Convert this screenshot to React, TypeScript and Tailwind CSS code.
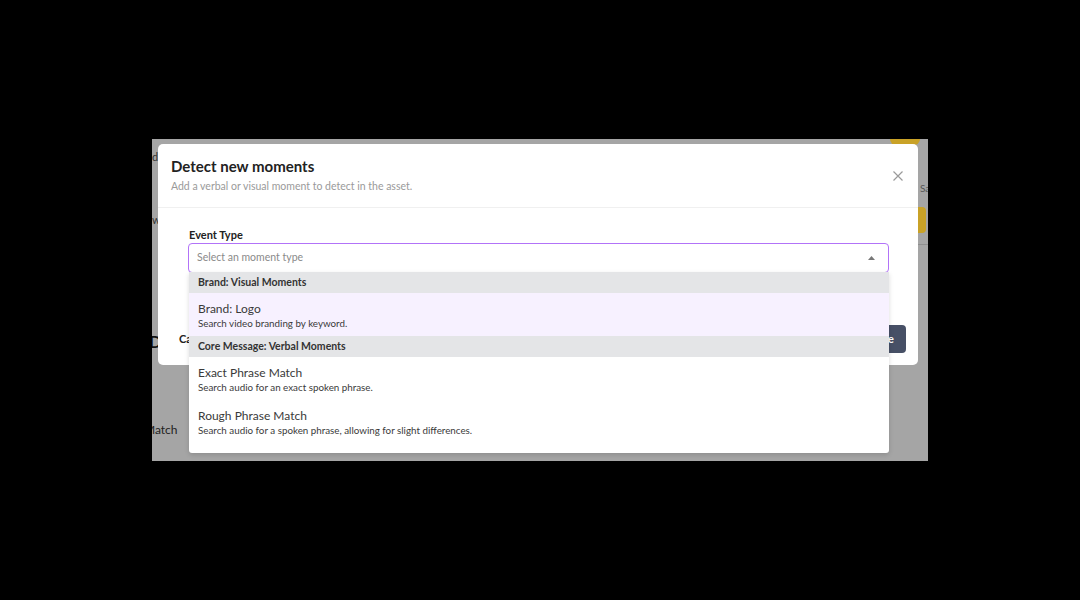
import React from "react";

const font = { fontFamily: "Lato, 'Open Sans', 'Liberation Sans', sans-serif" };

function Item({ title, desc, active }: { title: string; desc: string; active?: boolean }) {
  return (
    <div className={`h-[43px] px-[9px] flex flex-col justify-center ${active ? "bg-[#f7f1ff]" : "bg-white"}`}>
      <div className="text-[12px] leading-[15px] text-[#3a3a3a]">{title}</div>
      <div className="text-[9.8px] leading-[12px] text-[#3a3a3a] mt-[1px]">{desc}</div>
    </div>
  );
}

function Header({ label }: { label: string }) {
  return (
    <div className="h-[21px] px-[9px] flex items-center bg-[#e4e5e7] text-[10.5px] font-bold text-[#333]">
      {label}
    </div>
  );
}

export default function App() {
  return (
    <div className="w-[1080px] h-[600px] bg-black pt-[139px] pl-[152px]" style={font}>
      <div className="relative w-[776px] h-[322px] bg-[#a5a5a5] overflow-hidden">
        {/* background page fragments, partly covered by the modal */}
        <div className="absolute left-0 top-[10px] text-[11px] text-[#333]">d</div>
        <div className="absolute left-0 top-[73px] text-[11px] text-[#333]">w:</div>
        <div className="absolute left-[-3px] top-[190px] text-[17px] font-bold text-[#111]">D</div>
        <div className="absolute left-[-8px] top-[282px] text-[12px] text-[#222]">Match</div>
        <div className="absolute left-[768px] top-[42px] text-[10px] text-[#555]">Sa</div>
        <div className="absolute left-[738px] top-[-8px] w-[30px] h-[14px] rounded-b-[6px] bg-[#c9a227]" />
        <div className="absolute left-[760px] top-[68px] w-[14px] h-[26px] rounded-[4px] bg-[#c9a227]" />
        <div className="absolute left-[766px] top-[105px] w-[10px] h-px bg-[#8e8e8e]" />

        {/* modal */}
        <div className="absolute left-[6px] top-[5px] w-[760px] h-[221px] bg-white rounded-[5px] flex flex-col pb-[12px]">
          <div className="flex justify-between items-start px-[13px] pt-[12px]">
            <div>
              <div className="text-[15px] leading-[20px] font-bold text-[#222]">Detect new moments</div>
              <div className="text-[10.5px] leading-[14px] text-[#9a9a9a] mt-[3px]">
                Add a verbal or visual moment to detect in the asset.
              </div>
            </div>
            <svg width="12" height="12" viewBox="0 0 12 12" className="mt-[14px] mr-[1px]">
              <path d="M1.5 1.5 L10.5 10.5 M10.5 1.5 L1.5 10.5" stroke="#9a9a9a" strokeWidth="1.2" />
            </svg>
          </div>
          <div className="h-px bg-[#f0f0f0] mt-[14px]" />
          <div className="px-[31px] pt-[20px]">
            <div className="text-[11px] leading-[14px] font-bold text-[#222]">Event Type</div>
            <div className="mt-[1px] ml-[-1px] h-[30px] w-[701px] border-[1.5px] border-[#b273f8] rounded-[4px] flex items-center justify-between pl-[8px] pr-[12px]">
              <span className="text-[10.5px] text-[#8a8a8a]">Select an moment type</span>
              <svg width="9" height="6" viewBox="0 0 9 6">
                <path d="M4.5 1 L8 5 L1 5 Z" fill="#777" />
              </svg>
            </div>
          </div>
          <div className="mt-auto flex justify-between items-center px-[12px]">
            <span className="text-[11px] font-bold text-[#222] ml-[9px]">Cancel</span>
            <div className="h-[28px] px-[12px] rounded-[4px] bg-[#475066] flex items-center text-[11px] font-bold text-white">
              Save
            </div>
          </div>
        </div>

        {/* open dropdown menu */}
        <div className="absolute left-[37px] top-[133px] w-[700px] bg-white rounded-b-[3px] shadow-[0_2px_5px_rgba(0,0,0,0.14)] pb-[10px]">
          <Header label="Brand: Visual Moments" />
          <Item title="Brand: Logo" desc="Search video branding by keyword." active />
          <Header label="Core Message: Verbal Moments" />
          <Item title="Exact Phrase Match" desc="Search audio for an exact spoken phrase." />
          <Item title="Rough Phrase Match" desc="Search audio for a spoken phrase, allowing for slight differences." />
        </div>
      </div>
    </div>
  );
}
